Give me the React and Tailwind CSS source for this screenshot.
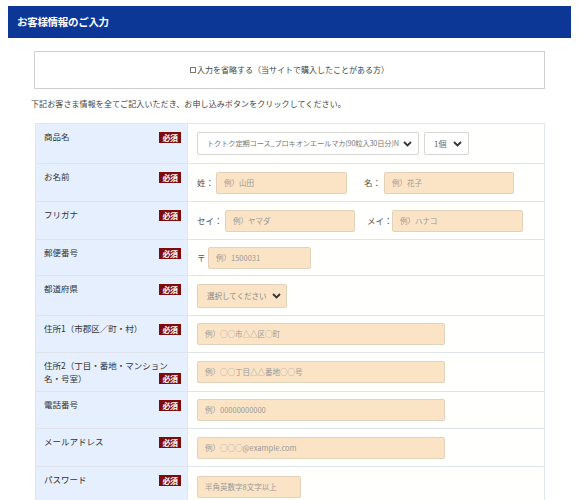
import React from "react";

const Chevron = () => (
  <svg width="9" height="6" viewBox="0 0 9 6" className="shrink-0 block">
    <polyline points="1,1 4.5,4.5 8,1" fill="none" stroke="#333" strokeWidth="1.8" />
  </svg>
);

const Badge = ({ className = "" }) => (
  <div className={`flex items-center justify-center w-[22px] h-[11px] bg-[#7d0b0b] text-white text-[8px] font-bold leading-none shrink-0 tracking-[-0.5px] ${className}`}>
    必須
  </div>
);

const Field = ({ w, text }) => (
  <div
    className={`h-[22px] ${w} shrink-0 bg-[#fbe4c6] border border-[#e2d2ba] rounded-[2px] flex items-center pl-[7px] text-[7.5px] text-[#999] whitespace-nowrap overflow-hidden`}
  >
    {text}
  </div>
);

const rows = [
  {
    label: "商品名",
    h: "h-[39px]",
    content: (
      <div className="flex items-center gap-[5px]">
        <div className="h-[23px] w-[222px] bg-white border border-[#d6d6d6] rounded-[2px] flex items-center justify-between pl-[9px] pr-[6px]">
          <span className="text-[7.3px] text-[#777] whitespace-nowrap tracking-[-0.2px]">
            トクトク定期コース_プロキオンエールマカ(90粒入30日分)N
          </span>
          <Chevron />
        </div>
        <div className="h-[23px] w-[45px] bg-white border border-[#d6d6d6] rounded-[2px] flex items-center justify-between pl-[9px] pr-[6px]">
          <span className="text-[8px] text-[#666]">1個</span>
          <Chevron />
        </div>
      </div>
    ),
  },
  {
    label: "お名前",
    h: "h-[38px]",
    content: (
      <div className="flex items-center text-[8.5px] text-[#555] whitespace-nowrap">
        <span className="w-[19px] shrink-0">姓：</span>
        <Field w="w-[131px]" text="例）山田" />
        <span className="ml-[17px] w-[20px] shrink-0">名：</span>
        <Field w="w-[130px]" text="例）花子" />
      </div>
    ),
  },
  {
    label: "フリガナ",
    h: "h-[38px]",
    content: (
      <div className="flex items-center text-[8.5px] text-[#555] whitespace-nowrap">
        <span className="w-[28px] shrink-0">セイ：</span>
        <Field w="w-[130px]" text="例）ヤマダ" />
        <span className="ml-[12px] w-[25px] shrink-0">メイ：</span>
        <Field w="w-[131px]" text="例）ハナコ" />
      </div>
    ),
  },
  {
    label: "郵便番号",
    h: "h-[36px]",
    content: (
      <div className="flex items-center text-[8.5px] text-[#555]">
        <span className="w-[11px] shrink-0">〒</span>
        <Field w="w-[103px]" text="例）1500031" />
      </div>
    ),
  },
  {
    label: "都道府県",
    h: "h-[40px]",
    content: (
      <div className="h-[24px] w-[90px] bg-[#fbe4c6] border border-[#e2d2ba] rounded-[2px] flex items-center justify-between pl-[9px] pr-[5px]">
        <span className="text-[7.5px] text-[#888] whitespace-nowrap">選択してください</span>
        <Chevron />
      </div>
    ),
  },
  {
    label: "住所1（市郡区／町・村）",
    h: "h-[37px]",
    content: <Field w="w-[248px]" text="例）○○市△△区○町" />,
  },
  {
    label: "住所2",
    h: "h-[39px]",
    wrap: true,
    content: <Field w="w-[248px]" text="例）○○丁目△△番地○○号" />,
  },
  {
    label: "電話番号",
    h: "h-[37px]",
    content: <Field w="w-[248px]" text="例）00000000000" />,
  },
  {
    label: "メールアドレス",
    h: "h-[38px]",
    content: <Field w="w-[248px]" text="例）○○○@example.com" />,
  },
  {
    label: "パスワード",
    h: "h-[40px]",
    content: <Field w="w-[104px]" text="半角英数字8文字以上" />,
  },
];

export default function App() {
  return (
    <div className="w-[580px] h-[500px] overflow-hidden bg-white font-['Noto_Sans_CJK_JP',sans-serif] text-[#333]">
      <div className="pt-[6px] pl-[8px] pr-[9px]">
        <div className="h-[32px] bg-[#0c3797] flex items-center pl-[9px]">
          <span className="text-white font-bold text-[10.5px] tracking-[-0.3px]">お客様情報のご入力</span>
        </div>
      </div>

      <div className="mt-[13px] ml-[34px] mr-[35px] h-[38px] border border-[#cfcfcf] flex items-center justify-center">
        <div className="text-[8px] text-[#444] flex items-center">
          <div className="w-[6px] h-[6px] border border-[#777] mr-[1px]"></div>
          <span>入力を省略する（当サイトで購入したことがある方）</span>
        </div>
      </div>

      <div className="mt-[9px] ml-[31px] text-[8px] text-[#444] tracking-[0.1px]">
        下記お客さま情報を全てご記入いただき、お申し込みボタンをクリックしてください。
      </div>

      <div className="mt-[13px] ml-[35px] mr-[35px] border border-[#dfe6ef]">
        {rows.map((r, i) => (
          <div
            key={i}
            className={`grid grid-cols-[152px_1fr] ${r.h} ${i > 0 ? "border-t border-[#dfe4ea]" : ""}`}
          >
            <div className="bg-[#e5effd] pl-[8px] pr-[6px] pt-[6px] border-r border-[#dfe6ef]">
              {r.wrap ? (
                <div className="text-[8.5px] leading-[13px] text-[#333]">
                  <div className="whitespace-nowrap">住所2（丁目・番地・マンション</div>
                  <div className="flex items-start justify-between">
                    <span>名・号室）</span>
                    <Badge className="mt-[1px]" />
                  </div>
                </div>
              ) : (
                <div className="flex items-start justify-between">
                  <span className="text-[8.5px] leading-[13px] text-[#333] whitespace-nowrap">{r.label}</span>
                  <Badge className="mt-[2px]" />
                </div>
              )}
            </div>
            <div className="bg-[#fffffd] pl-[9px] flex items-center">{r.content}</div>
          </div>
        ))}
      </div>
    </div>
  );
}
